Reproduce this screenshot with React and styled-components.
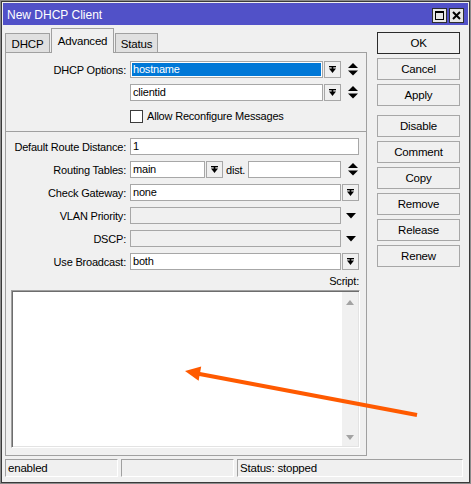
import React from 'react';
import styled, { createGlobalStyle } from 'styled-components';

const GlobalStyle = createGlobalStyle`
  html, body { margin: 0; padding: 0; background: #f0f0f0; }
  * { box-sizing: border-box; }
  body {
    font-family: "Liberation Sans", Arial, sans-serif;
    font-size: 11px;
    color: #000;
  }
`;

const Window = styled.div`
  position: relative;
  width: 471px;
  height: 484px;
  border: 1px solid #8c8c8c;
  box-shadow: inset 0 0 0 1px #3a3a3a;
  padding: 2px;
  background: #f0f0f0;
  display: flex;
  flex-direction: column;
  overflow: hidden;
`;

const TitleBar = styled.div`
  height: 22px;
  flex-shrink: 0;
  background: #5151c8;
  color: #fff;
  display: flex;
  align-items: center;
  padding: 0 4px;
`;

const TitleText = styled.div`
  flex: 1;
  font-size: 12px;
  padding-top: 1px;
`;

const TitleButtons = styled.div`
  display: flex;
  gap: 2px;
  align-self: flex-end;
  margin-bottom: 2px;
`;

const TitleBtn = styled.div`
  width: 15px;
  height: 15px;
  border: 1px solid #2e2e2e;
  background: #e6e6e6;
  display: flex;
  align-items: center;
  justify-content: center;
`;

const Body = styled.div`
  flex: 1;
  display: flex;
  padding: 0 8px 1px 2px;
`;

const LeftCol = styled.div`
  width: 362px;
  display: flex;
  flex-direction: column;
`;

const TabRow = styled.div`
  position: relative;
  z-index: 1;
  height: 28px;
  padding-top: 3px;
  margin-bottom: -1px;
  display: flex;
  align-items: flex-end;
`;

const Tab = styled.div`
  width: ${(p) => p.w}px;
  height: ${(p) => (p.active ? 25 : 20)}px;
  padding-top: ${(p) => (p.active ? 5 : 3)}px;
  margin-right: 1px;
  line-height: 14px;
  font-size: 11.5px;
  text-align: center;
  letter-spacing: -0.2px;
  border: 1px solid #a0a0a0;
  border-bottom: ${(p) => (p.active ? 'none' : '1px solid #a0a0a0')};
  background: ${(p) => (p.active ? '#f0f0f0' : '#e0e0e0')};
`;

const Panel = styled.div`
  height: 404px;
  border: 1px solid #a0a0a0;
  background: #f0f0f0;
  display: flex;
  flex-direction: column;
  padding: 8px 0 7px 0;
`;

const Row = styled.div`
  display: flex;
  align-items: center;
  height: 17px;
  margin-top: ${(p) => p.mt || 0}px;
  flex-shrink: 0;
`;

const Label = styled.div`
  width: 120px;
  margin-right: 4px;
  text-align: right;
  white-space: nowrap;
  letter-spacing: -0.2px;
`;

const Fields = styled.div`
  width: 229px;
  height: 17px;
  display: flex;
  align-items: center;
`;

const Input = styled.div`
  height: 17px;
  ${(p) => (p.w ? `width: ${p.w}px; flex-shrink: 0;` : 'flex: 1;')}
  border: 1px solid #a7a7a7;
  background: ${(p) => (p.selected ? '#0078d7' : p.disabled ? '#f0f0f0' : '#fff')};
  color: ${(p) => (p.selected ? '#fff' : '#000')};
  box-shadow: ${(p) => (p.selected ? 'inset 0 0 0 1px #fff' : 'none')};
  padding: 0 2px;
  line-height: 15px;
  letter-spacing: -0.2px;
  white-space: nowrap;
  overflow: hidden;
`;

const DropBtn = styled.div`
  width: 17px;
  height: 17px;
  flex-shrink: 0;
  margin-left: 1px;
  border: 1px solid #a7a7a7;
  background: #f0f0f0;
  display: flex;
  align-items: center;
  justify-content: center;
`;

const Slot = styled.div`
  width: 18px;
  height: 17px;
  flex-shrink: 0;
  display: flex;
  align-items: center;
  justify-content: flex-end;
  padding-right: ${(p) => p.pr || 1}px;
`;

const Inline = styled.span`
  margin: 0 3px 0 3px;
  letter-spacing: -0.2px;
`;

const CheckRow = styled.div`
  display: flex;
  align-items: center;
  height: 14px;
  margin: 8px 0 0 124px;
  gap: 4px;
  letter-spacing: -0.2px;
`;

const CheckBox = styled.div`
  width: 13px;
  height: 13px;
  border: 1px solid #3c3c3c;
  background: #fff;
`;

const Separator = styled.div`
  height: 1px;
  background: #a0a0a0;
  margin-top: 8px;
  flex-shrink: 0;
`;

const ScriptLabel = styled.div`
  height: 14px;
  line-height: 14px;
  margin-top: 4px;
  text-align: right;
  padding-right: 7px;
  letter-spacing: -0.2px;
`;

const ScriptBox = styled.div`
  height: 158px;
  margin: 2px 6px 0 5px;
  display: flex;
  border: 1px solid;
  border-color: #a0a0a0 #ffffff #ffffff #a0a0a0;
  box-shadow: inset 1px 1px 0 #6d6d6d, inset -1px -1px 0 #e3e3e3;
  background: #fff;
  padding: 1px;
`;

const ScriptArea = styled.textarea`
  flex: 1;
  border: none;
  outline: none;
  resize: none;
  background: #fff;
  font: inherit;
`;

const ScrollTrack = styled.div`
  width: 16px;
  background: #f0f0f0;
  display: flex;
  flex-direction: column;
  justify-content: space-between;
  align-items: center;
  padding: 8px 0 6px;
`;

const ButtonCol = styled.div`
  width: 83px;
  margin-left: 10px;
  padding-top: 7px;
  display: flex;
  flex-direction: column;
  gap: 4px;
`;

const Button = styled.div`
  height: 22px;
  border: 1px solid ${(p) => (p.primary ? '#2b2b2b' : '#a7a7a7')};
  background: #f0f0f0;
  display: flex;
  align-items: center;
  justify-content: center;
  font-size: 11.5px;
  letter-spacing: -0.2px;
  margin-top: ${(p) => p.mt || 0}px;
`;

const StatusBar = styled.div`
  height: 24px;
  flex-shrink: 0;
  display: flex;
  gap: 3px;
  padding: 2px 5px 4px 2px;
`;

const StatusCell = styled.div`
  ${(p) => (p.w ? `width: ${p.w}px;` : 'flex: 1;')}
  height: 18px;
  border: 1px solid;
  border-color: #a0a0a0 #ffffff #ffffff #a0a0a0;
  padding-left: 2px;
  line-height: 16px;
  font-size: 11.5px;
  letter-spacing: -0.2px;
`;

const Overlay = styled.svg`
  position: absolute;
  left: -1px;
  top: -1px;
  pointer-events: none;
`;

const DropIcon = () => (
  <svg width="7" height="8" viewBox="0 0 7 8">
    <rect x="0" y="0" width="7" height="1.3" fill="#000" />
    <polygon points="0,2.5 7,2.5 3.5,7" fill="#000" />
    <rect x="2.7" y="1" width="1.6" height="2" fill="#000" />
  </svg>
);

const SpinIcon = () => (
  <svg width="10" height="13" viewBox="0 0 10 13">
    <polygon points="5,0 10,5 0,5" fill="#000" />
    <polygon points="0,7.5 10,7.5 5,12.5" fill="#000" />
  </svg>
);

const DownIcon = () => (
  <svg width="10" height="6" viewBox="0 0 10 6">
    <polygon points="0,0 10,0 5,5.5" fill="#000" />
  </svg>
);

const ScrollArrow = ({ down }) => (
  <svg width="8" height="5" viewBox="0 0 8 5">
    <polygon points={down ? '0,0 8,0 4,5' : '4,0 8,5 0,5'} fill="#a3a3a3" />
  </svg>
);

const buttons = ['OK', 'Cancel', 'Apply', 'Disable', 'Comment', 'Copy', 'Remove', 'Release', 'Renew'];

export default function App() {
  return (
    <>
      <GlobalStyle />
      <Window>
        <TitleBar>
          <TitleText>New DHCP Client</TitleText>
          <TitleButtons>
            <TitleBtn>
              <svg width="9" height="9" viewBox="0 0 9 9">
                <rect x="0.5" y="0.5" width="8" height="8" fill="none" stroke="#000" />
                <rect x="0" y="0" width="9" height="2" fill="#000" />
              </svg>
            </TitleBtn>
            <TitleBtn>
              <svg width="9" height="9" viewBox="0 0 9 9">
                <path d="M1 1 L8 8 M8 1 L1 8" stroke="#000" strokeWidth="2" />
              </svg>
            </TitleBtn>
          </TitleButtons>
        </TitleBar>

        <Body>
          <LeftCol>
            <TabRow>
              <Tab w={45}>DHCP</Tab>
              <Tab w={63} active>Advanced</Tab>
              <Tab w={43}>Status</Tab>
            </TabRow>
            <Panel>
              <Row>
                <Label>DHCP Options:</Label>
                <Fields>
                  <Input selected>hostname</Input>
                  <DropBtn><DropIcon /></DropBtn>
                  <Slot><SpinIcon /></Slot>
                </Fields>
              </Row>
              <Row mt={6}>
                <Label />
                <Fields>
                  <Input>clientid</Input>
                  <DropBtn><DropIcon /></DropBtn>
                  <Slot><SpinIcon /></Slot>
                </Fields>
              </Row>
              <CheckRow>
                <CheckBox />
                <span>Allow Reconfigure Messages</span>
              </CheckRow>
              <Separator />
              <Row mt={6}>
                <Label>Default Route Distance:</Label>
                <Fields>
                  <Input>1</Input>
                </Fields>
              </Row>
              <Row mt={6}>
                <Label>Routing Tables:</Label>
                <Fields>
                  <Input w={75}>main</Input>
                  <DropBtn><DropIcon /></DropBtn>
                  <Inline>dist.</Inline>
                  <Input />
                  <Slot><SpinIcon /></Slot>
                </Fields>
              </Row>
              <Row mt={6}>
                <Label>Check Gateway:</Label>
                <Fields>
                  <Input>none</Input>
                  <DropBtn><DropIcon /></DropBtn>
                </Fields>
              </Row>
              <Row mt={6}>
                <Label>VLAN Priority:</Label>
                <Fields>
                  <Input disabled />
                  <Slot pr={3}><DownIcon /></Slot>
                </Fields>
              </Row>
              <Row mt={6}>
                <Label>DSCP:</Label>
                <Fields>
                  <Input disabled />
                  <Slot pr={3}><DownIcon /></Slot>
                </Fields>
              </Row>
              <Row mt={6}>
                <Label>Use Broadcast:</Label>
                <Fields>
                  <Input>both</Input>
                  <DropBtn><DropIcon /></DropBtn>
                </Fields>
              </Row>
              <ScriptLabel>Script:</ScriptLabel>
              <ScriptBox>
                <ScriptArea defaultValue="" />
                <ScrollTrack>
                  <ScrollArrow />
                  <ScrollArrow down />
                </ScrollTrack>
              </ScriptBox>
            </Panel>
          </LeftCol>

          <ButtonCol>
            {buttons.map((b) => (
              <Button key={b} primary={b === 'OK'} mt={b === 'Disable' ? 5 : 0}>
                {b}
              </Button>
            ))}
          </ButtonCol>
        </Body>

        <StatusBar>
          <StatusCell w={113}>enabled</StatusCell>
          <StatusCell w={113} />
          <StatusCell>Status: stopped</StatusCell>
        </StatusBar>

        <Overlay width="471" height="484" viewBox="0 0 471 484">
          <line x1="417" y1="415" x2="197" y2="373.5" stroke="#ff5a00" strokeWidth="4" />
          <polygon points="185,371 201.2,366.6 198.6,380.8" fill="#ff5a00" />
        </Overlay>
      </Window>
    </>
  );
}
